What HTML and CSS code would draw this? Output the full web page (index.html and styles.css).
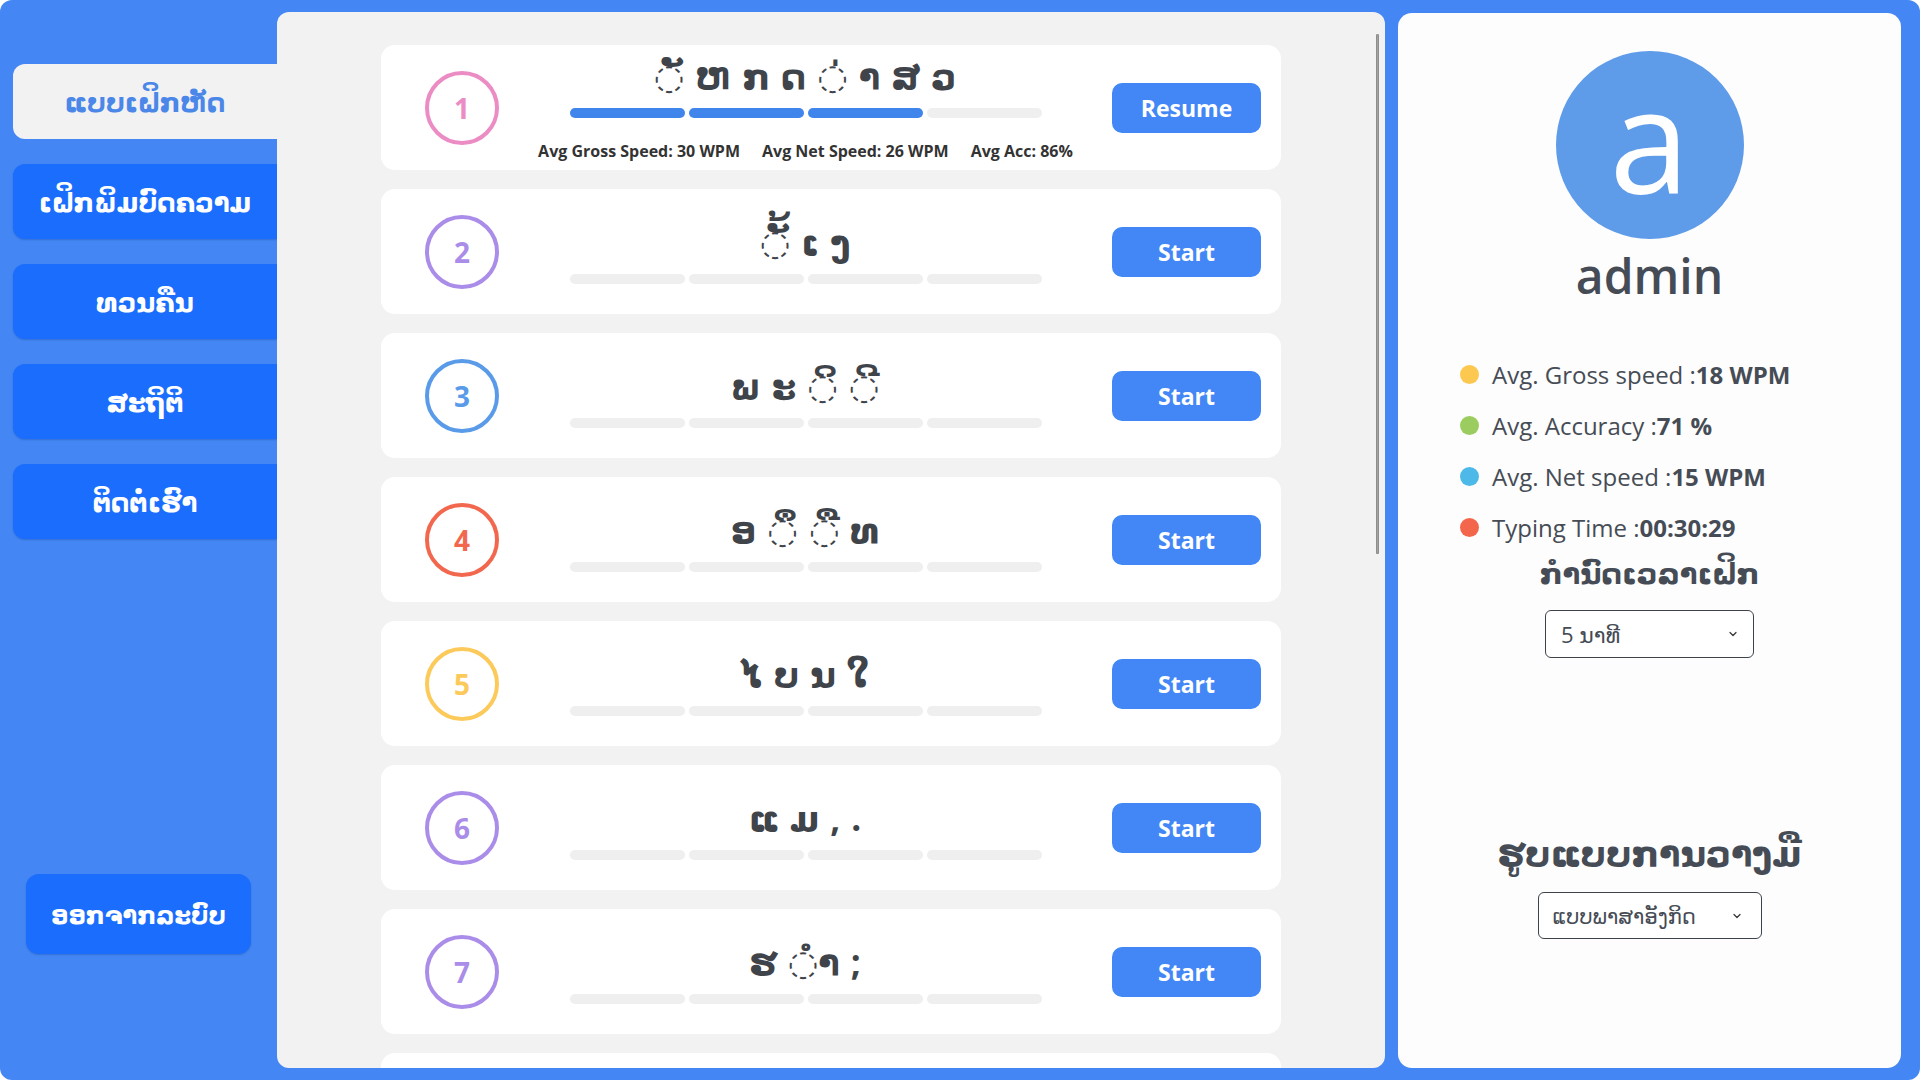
FILE: index.html
```html
<!DOCTYPE html>
<html lang="lo">
<head>
<meta charset="utf-8">
<title>Lao Typing</title>
<link rel="stylesheet" href="styles.css">
</head>
<body>
<div class="app">
  <aside class="sidebar">
    <nav class="nav">
      <a class="nav-item active">ແບບເຝິກຫັດ</a>
      <a class="nav-item">ເຝິກພິມບົດຄວາມ</a>
      <a class="nav-item">ທວນຄືນ</a>
      <a class="nav-item">ສະຖິຕິ</a>
      <a class="nav-item">ຕິດຕໍ່ເຮົາ</a>
    </nav>
    <button class="logout">ອອກຈາກລະບົບ</button>
  </aside>

  <div class="lessons-wrap">
    <main class="lessons">
      <div class="lesson">
        <div class="num c-pink">1</div>
        <div class="lesson-body">
          <div class="keys">◌ັ ຫ ກ ດ ◌່ າ ສ ວ</div>
          <div class="bar"><span class="seg done"></span><span class="seg done"></span><span class="seg done"></span><span class="seg"></span></div>
          <div class="lesson-stats"><span>Avg Gross Speed: 30 WPM</span><span>Avg Net Speed: 26 WPM</span><span>Avg Acc: 86%</span></div>
        </div>
        <button class="go">Resume</button>
      </div>
      <div class="lesson">
        <div class="num c-purple">2</div>
        <div class="lesson-body">
          <div class="keys">◌ັ້ ເ ງ</div>
          <div class="bar"><span class="seg"></span><span class="seg"></span><span class="seg"></span><span class="seg"></span></div>
        </div>
        <button class="go">Start</button>
      </div>
      <div class="lesson">
        <div class="num c-blue">3</div>
        <div class="lesson-body">
          <div class="keys">ພ ະ ◌ິ ◌ີ</div>
          <div class="bar"><span class="seg"></span><span class="seg"></span><span class="seg"></span><span class="seg"></span></div>
        </div>
        <button class="go">Start</button>
      </div>
      <div class="lesson">
        <div class="num c-red">4</div>
        <div class="lesson-body">
          <div class="keys">ອ ◌ຶ ◌ື ທ</div>
          <div class="bar"><span class="seg"></span><span class="seg"></span><span class="seg"></span><span class="seg"></span></div>
        </div>
        <button class="go">Start</button>
      </div>
      <div class="lesson">
        <div class="num c-yellow">5</div>
        <div class="lesson-body">
          <div class="keys">ໄ ບ ນ ໃ</div>
          <div class="bar"><span class="seg"></span><span class="seg"></span><span class="seg"></span><span class="seg"></span></div>
        </div>
        <button class="go">Start</button>
      </div>
      <div class="lesson">
        <div class="num c-purple">6</div>
        <div class="lesson-body">
          <div class="keys">ແ ມ , .</div>
          <div class="bar"><span class="seg"></span><span class="seg"></span><span class="seg"></span><span class="seg"></span></div>
        </div>
        <button class="go">Start</button>
      </div>
      <div class="lesson">
        <div class="num c-purple">7</div>
        <div class="lesson-body">
          <div class="keys">ຮ ◌ຳ ;</div>
          <div class="bar"><span class="seg"></span><span class="seg"></span><span class="seg"></span><span class="seg"></span></div>
        </div>
        <button class="go">Start</button>
      </div>
      <div class="lesson">
        <div class="num c-blue">8</div>
        <div class="lesson-body">
          <div class="keys">ຢ ຟ ໂ ຖ</div>
          <div class="bar"><span class="seg"></span><span class="seg"></span><span class="seg"></span><span class="seg"></span></div>
        </div>
        <button class="go">Start</button>
      </div>
      <div class="lesson">
        <div class="num c-red">9</div>
        <div class="lesson-body">
          <div class="keys">◌ຸ ◌ູ ຄ ຕ</div>
          <div class="bar"><span class="seg"></span><span class="seg"></span><span class="seg"></span><span class="seg"></span></div>
        </div>
        <button class="go">Start</button>
      </div>
      <div class="lesson">
        <div class="num c-yellow">10</div>
        <div class="lesson-body">
          <div class="keys">ຈ ຂ ຊ ◌ໍ</div>
          <div class="bar"><span class="seg"></span><span class="seg"></span><span class="seg"></span><span class="seg"></span></div>
        </div>
        <button class="go">Start</button>
      </div>
      <div class="lesson">
        <div class="num c-pink">11</div>
        <div class="lesson-body">
          <div class="keys">◌ົ ຳ ຮ ນ</div>
          <div class="bar"><span class="seg"></span><span class="seg"></span><span class="seg"></span><span class="seg"></span></div>
        </div>
        <button class="go">Start</button>
      </div>
      <div class="lesson">
        <div class="num c-purple">12</div>
        <div class="lesson-body">
          <div class="keys">ຍ ບ ລ ງ</div>
          <div class="bar"><span class="seg"></span><span class="seg"></span><span class="seg"></span><span class="seg"></span></div>
        </div>
        <button class="go">Start</button>
      </div>
      <div class="lesson">
        <div class="num c-blue">13</div>
        <div class="lesson-body">
          <div class="keys">ຜ ປ ແ ອ</div>
          <div class="bar"><span class="seg"></span><span class="seg"></span><span class="seg"></span><span class="seg"></span></div>
        </div>
        <button class="go">Start</button>
      </div>
      <div class="lesson">
        <div class="num c-red">14</div>
        <div class="lesson-body">
          <div class="keys">ມ ໃ ຝ ເ</div>
          <div class="bar"><span class="seg"></span><span class="seg"></span><span class="seg"></span><span class="seg"></span></div>
        </div>
        <button class="go">Start</button>
      </div>
    </main>
    <div class="scroll-thumb"></div>
  </div>

  <section class="profile">
    <div class="avatar">a</div>
    <div class="username">admin</div>
    <ul class="stats">
      <li><span class="dot d-yellow"></span>Avg. Gross speed :<b>18 WPM</b></li>
      <li><span class="dot d-green"></span>Avg. Accuracy :<b>71 %</b></li>
      <li><span class="dot d-cyan"></span>Avg. Net speed :<b>15 WPM</b></li>
      <li><span class="dot d-red"></span>Typing Time :<b>00:30:29</b></li>
    </ul>
    <h3 class="setting-title">ກຳນົດເວລາເຝິກ</h3>
    <div class="select sel-time"><span>5 ນາທີ</span><svg class="chev" viewBox="0 0 12 12" width="12" height="12"><path d="M3 4.5 L6 7.5 L9 4.5" fill="none" stroke="#333" stroke-width="1.2" stroke-linecap="round" stroke-linejoin="round"/></svg></div>
    <h3 class="setting-title layout-title">ຮູບແບບການວາງມື</h3>
    <div class="select sel-layout"><span>ແບບພາສາອັງກິດ</span><svg class="chev" viewBox="0 0 12 12" width="12" height="12"><path d="M3 4.5 L6 7.5 L9 4.5" fill="none" stroke="#333" stroke-width="1.2" stroke-linecap="round" stroke-linejoin="round"/></svg></div>
  </section>
</div>
</body>
</html>
```
FILE: styles.css
```css
* { box-sizing: border-box; }
html, body { margin: 0; padding: 0; background: #ffffff; }
body {
  font-family: "Open Sans", "Noto Sans", "DejaVu Sans", sans-serif;
  color: #464c55;
}
.app {
  width: 1920px;
  height: 1080px;
  background: #4487f4;
  border-radius: 12px;
  display: flex;
  padding: 12px 19px 12px 13px;
  overflow: hidden;
}

/* sidebar */
.sidebar {
  width: 264px;
  flex: none;
  display: flex;
  flex-direction: column;
  padding: 52px 0 114px 0;
}
.nav { display: flex; flex-direction: column; gap: 25px; }
.nav-item {
  height: 75px;
  display: flex;
  align-items: center;
  justify-content: center;
  background: #1a6dfd;
  color: #ffffff;
  font-size: 26px;
  font-weight: 700;
  border-radius: 12px 0 0 12px;
  box-shadow: 0 1px 2px rgba(0, 40, 120, 0.25);
  text-decoration: none;
}
.nav-item.active {
  background: #f2f2f2;
  color: #4a87e8;
  box-shadow: none;
}
.logout {
  margin-top: auto;
  margin-left: 13px;
  width: 225px;
  height: 80px;
  border: none;
  border-radius: 13px;
  background: #1a6dfd;
  color: #ffffff;
  font-family: inherit;
  font-size: 24px;
  font-weight: 700;
  box-shadow: 0 1px 2px rgba(0, 40, 120, 0.25);
}

/* lessons */
.lessons-wrap {
  position: relative;
  width: 1108px;
  flex: none;
}
.lessons {
  height: 100%;
  background: #f2f2f2;
  border-radius: 12px;
  overflow: hidden;
  padding: 33px 0 33px;
  display: flex;
  flex-direction: column;
  align-items: center;
  gap: 19px;
}
.scroll-thumb {
  position: absolute;
  right: 6px;
  top: 22px;
  width: 3px;
  height: 520px;
  border-radius: 2px;
  background: #a3a3a3;
  box-shadow: inset 0 0 0 1px #8e8e8e;
}
.lesson {
  flex: none;
  width: 900px;
  height: 125px;
  background: #ffffff;
  border-radius: 14px;
  display: flex;
  align-items: center;
  padding: 0 20px 0 44px;
}
.num {
  width: 74px;
  height: 74px;
  flex: none;
  border-radius: 50%;
  border: 4px solid currentColor;
  display: flex;
  align-items: center;
  justify-content: center;
  font-size: 28px;
  font-weight: 700;
}
.c-pink { color: #ec8cc4; }
.c-purple { color: #aa8de9; }
.c-blue { color: #5a9be9; }
.c-red { color: #f2684e; }
.c-yellow { color: #fcca5a; }

.lesson-body {
  flex: 1;
  display: flex;
  flex-direction: column;
  align-items: center;
}
.keys {
  font-size: 35px;
  line-height: 46px;
  font-weight: 700;
  color: #3f444b;
  letter-spacing: 1px;
  white-space: pre;
}
.bar {
  display: flex;
  gap: 4px;
  width: 472px;
  margin-top: 9px;
}
.seg {
  flex: 1;
  height: 10px;
  border-radius: 5px;
  background: #efefef;
}
.seg.done { background: #3f85ec; }
.lesson-stats {
  margin-top: 22px;
  display: flex;
  gap: 22px;
  font-size: 16px;
  font-weight: 700;
  color: #333333;
  line-height: 22px;
}
.go {
  flex: none;
  width: 149px;
  height: 50px;
  border: none;
  border-radius: 10px;
  background: #4287f5;
  color: #ffffff;
  font-family: inherit;
  font-size: 23px;
  font-weight: 700;
}

/* profile */
.profile {
  flex: 1;
  margin-left: 13px;
  margin-top: 1px;
  background: #fdfdfd;
  border-radius: 14px;
  display: flex;
  flex-direction: column;
  align-items: center;
  padding-top: 38px;
}
.avatar {
  width: 188px;
  height: 188px;
  border-radius: 50%;
  background: #5e9be9;
  color: #ffffff;
  display: flex;
  align-items: center;
  justify-content: center;
  font-size: 144px;
  line-height: 1;
  padding-bottom: 14px;
}
.username {
  font-size: 48px;
  font-weight: 600;
  line-height: 60px;
  margin-top: 7px;
  color: #464c55;
}
.stats {
  list-style: none;
  margin: 43px 0 0 0;
  padding: 0 0 0 62px;
  align-self: stretch;
}
.stats li {
  display: flex;
  align-items: center;
  height: 51px;
  font-size: 24px;
}
.stats b { font-weight: 700; }
.dot {
  width: 19px;
  height: 19px;
  border-radius: 50%;
  margin-right: 13px;
  flex: none;
}
.d-yellow { background: #fcc84f; }
.d-green { background: #9bcc5f; }
.d-cyan { background: #4cb9e9; }
.d-red { background: #f4664b; }

.setting-title {
  margin: 0;
  font-size: 29px;
  line-height: 40px;
  font-weight: 700;
  color: #464c55;
}
.layout-title {
  margin-top: 171px;
  font-size: 35px;
  line-height: 48px;
}
.select {
  display: flex;
  align-items: center;
  justify-content: space-between;
  border: 1.5px solid #3d434b;
  border-radius: 6px;
  background: #ffffff;
  color: #464c55;
  font-size: 22px;
}
.sel-time {
  width: 209px;
  height: 48px;
  margin-top: 17px;
  padding: 0 14px 0 15px;
}
.sel-layout {
  width: 224px;
  height: 47px;
  margin-top: 15px;
  padding: 0 18px 0 14px;
  font-size: 21px;
}
.chev { flex: none; }
```
